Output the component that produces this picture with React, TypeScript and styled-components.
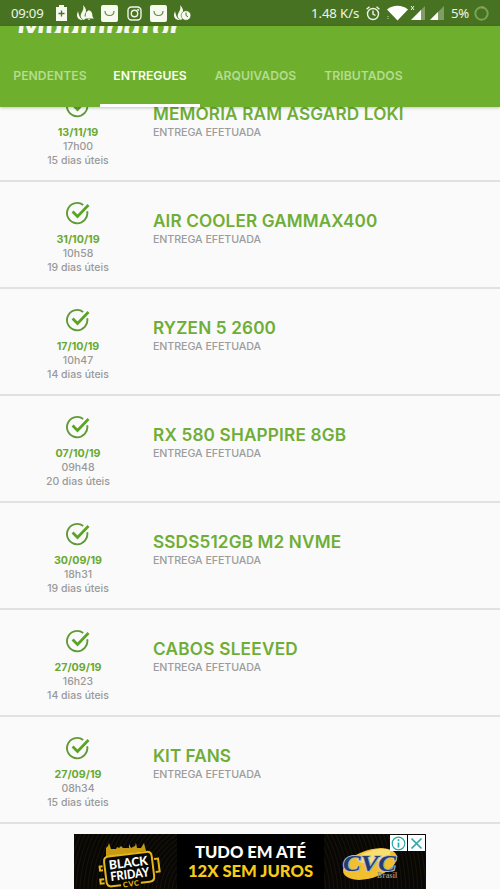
import React from "react";
import styled, { createGlobalStyle } from "styled-components";

const Global = createGlobalStyle`
  * { box-sizing: border-box; }
  body { margin: 0; background: #fafafa; overflow: hidden; }
`;

const Screen = styled.div`
  width: 500px;
  height: 889px;
  overflow: hidden;
  display: flex;
  flex-direction: column;
  background: #fafafa;
  font-family: Inter, "Liberation Sans", sans-serif;
`;

const StatusBar = styled.div`
  height: 26px;
  flex: none;
  display: flex;
  align-items: center;
  padding: 0 11px;
  background: #477221;
  color: #eef5e8;
  font: 400 13.2px/26px "Noto Sans", sans-serif;
`;

const StatusText = styled.span<{ $width: number; $spacing?: number; $gap?: number }>`
  width: ${(p) => p.$width}px;
  margin-left: ${(p) => p.$gap ?? 0}px;
  white-space: nowrap;
  letter-spacing: ${(p) => p.$spacing ?? 0}px;
`;

const StatusIcon = styled.svg<{ $gap?: number }>`
  flex: none;
  display: block;
  margin-left: ${(p) => p.$gap ?? 0}px;
`;

const Spacer = styled.div`
  flex: 1;
`;

const Header = styled.header`
  height: 81px;
  flex: none;
  display: flex;
  flex-direction: column;
  background: #6eb02d;
  box-shadow: 0 1px 3px rgba(0, 0, 0, 0.22);
  z-index: 1;
`;

const Brand = styled.div`
  height: 18px;
  flex: none;
  padding-left: 17px;
`;

const BrandName = styled.span`
  height: 7px;
  overflow: hidden;
  display: flex;
  align-items: flex-end;
  color: #f4f9ee;
  font: italic 900 32px/16px Lato, sans-serif;
  letter-spacing: 0.3px;
`;

const Tabs = styled.nav`
  flex: 1;
  display: flex;
`;

const Tab = styled.a<{ $active?: boolean; $width: number }>`
  width: ${(p) => p.$width}px;
  display: flex;
  justify-content: center;
  padding-top: 24px;
  color: ${(p) => (p.$active ? "#fafff5" : "#b5dc8f")};
  border-bottom: 3px solid ${(p) => (p.$active ? "#ffffff" : "transparent")};
  font-size: 12.2px;
  font-weight: 600;
  line-height: 16px;
  white-space: nowrap;
`;

const List = styled.main`
  flex: none;
  height: 717px;
  display: flex;
  flex-direction: column;
  justify-content: flex-end;
  overflow: hidden;
`;

const Row = styled.article`
  height: 107px;
  flex: none;
  display: flex;
  border-bottom: 2px solid #e1e1e1;
`;

const DateColumn = styled.div`
  width: 153px;
  padding: 18px 0 0 3px;
  display: flex;
  flex-direction: column;
  align-items: center;
  color: #999;
  font-size: 10.5px;
  font-weight: 500;
  line-height: 14px;
`;

const Check = styled.svg`
  display: block;
  margin-bottom: 6px;
`;

const DateText = styled.strong`
  color: #68a932;
  font-size: 10.7px;
  font-weight: 700;
  line-height: 15px;
`;

const Details = styled.div`
  padding-top: 29px;
  white-space: nowrap;
`;

const Title = styled.h2<{ $spacing: number }>`
  margin: 0;
  color: #6fae36;
  font-size: 17.2px;
  font-weight: 600;
  line-height: 20px;
  letter-spacing: ${(p) => p.$spacing}px;
`;

const State = styled.p`
  margin: 2px 0 0;
  color: #9c9c9c;
  font-size: 10.7px;
  font-weight: 500;
  line-height: 14px;
  letter-spacing: -0.08px;
`;

const AdArea = styled.footer`
  flex: 1;
  display: flex;
  justify-content: center;
  padding-top: 10px;
`;

const Ad = styled.div`
  position: relative;
  width: 352px;
  height: 55px;
  display: flex;
  background: repeating-radial-gradient(circle at 40% 110%, #080705 0 2px, #171307 3px, #080705 4px);
`;

const AdCopy = styled.div`
  width: 147px;
  padding-top: 9px;
  display: flex;
  flex-direction: column;
  align-items: center;
  background: #000;
  color: #fff;
  font: 900 16.6px/19px Lato, sans-serif;
  white-space: nowrap;
`;

const AdOffer = styled.span`
  color: #f8cc16;
`;

const AdArt = styled.svg`
  display: block;
  flex: none;
`;

const AdButtons = styled.div`
  position: absolute;
  top: 1px;
  right: 1px;
  display: flex;
  gap: 1px;
`;

const AdButton = styled.button`
  width: 17px;
  height: 16px;
  padding: 0;
  border: 0;
  background: #fff;
  display: grid;
  place-items: center;
`;

const items = [
  { date: "13/11/19", time: "17h00", days: 15, title: "MEMÓRIA RAM ASGARD LOKI", spacing: 0.13 },
  { date: "31/10/19", time: "10h58", days: 19, title: "AIR COOLER GAMMAX400", spacing: 0.1 },
  { date: "17/10/19", time: "10h47", days: 14, title: "RYZEN 5 2600", spacing: 0.13 },
  { date: "07/10/19", time: "09h48", days: 20, title: "RX 580 SHAPPIRE 8GB", spacing: 0.17 },
  { date: "30/09/19", time: "18h31", days: 19, title: "SSDS512GB M2 NVME", spacing: 0.13 },
  { date: "27/09/19", time: "16h23", days: 14, title: "CABOS SLEEVED", spacing: 0.24 },
  { date: "27/09/19", time: "08h34", days: 15, title: "KIT FANS", spacing: 0.02 },
];

const CheckIcon = () => (
  <Check width="26" height="26" viewBox="0 0 26 26" fill="none" stroke="#5f9a35" strokeWidth="1.9">
    <path d="M18.2 4.9A10.2 10.2 0 1 0 22.2 11.2" />
    <path d="m7.6 11.5 4.9 5L23.5 5" stroke="#5aa425" strokeWidth="2.7" />
  </Check>
);

const Flame = () => (
  <>
    <path d="M6 0c3 3 4 6 2 9-1 2 0 3 1 4l-2 2C3 13 3 10 5 7c1-2 2-4 1-7Z" />
    <path d="M1 6c1 4 1 6 5 9-4 0-6-2-6-5 0-2 1-3 1-4Z" />
  </>
);

const MailBox = ({ gap }: { gap: number }) => (
  <StatusIcon $gap={gap} width="17" height="17" viewBox="0 0 17 17">
    <rect width="17" height="17" rx="2" fill="#f6faef" />
    <path d="M4 6c0 6 9 6 9 0" fill="none" stroke="#668b48" strokeWidth="1.2" />
  </StatusIcon>
);

export default function App() {
  return (
    <Screen>
      <Global />
      <StatusBar>
        <StatusText $width={45} $spacing={-0.25}>09:09</StatusText>
        <StatusIcon width="11" height="16" viewBox="0 0 11 16" fill="#f6faef">
          <path d="M3 0h5v2h3v14H0V2h3Z" />
          <path d="M5.5 5.5v6M2.5 8.5h6" stroke="#477221" strokeWidth="1.3" />
        </StatusIcon>
        <StatusIcon $gap={10} width="17" height="16" viewBox="0 0 17 16" fill="#f6faef">
          <Flame />
          <path d="M7 13.5c1.6-1.2 1.6-2.6 1.8-4.5.2-2 1.3-3 2.700-3.300V5h1v.7c1.400.3 2.500 1.300 2.700 3.300.2 1.900.2 3.300 1.800 4.500Z" />
          <path d="M10.700 14.200h2.600q-1.300 1.800-2.600 0" />
        </StatusIcon>
        <MailBox gap={7} />
        <StatusIcon $gap={9} width="15" height="15" viewBox="0 0 15 15" fill="none" stroke="#eef5e8" strokeWidth="1.4">
          <rect x="1" y="1" width="13" height="13" rx="3.5" />
          <circle cx="7.5" cy="7.5" r="3.2" />
          <circle cx="11.2" cy="3.8" r=".4" />
        </StatusIcon>
        <MailBox gap={8} />
        <StatusIcon $gap={7} width="17" height="16" viewBox="0 0 17 16" fill="#f6faef">
          <Flame />
          <circle cx="12" cy="10.5" r="4.8" stroke="#477221" strokeWidth=".6" />
          <path d="M12 7.5v3l2 1.2" fill="none" stroke="#477221" />
        </StatusIcon>
        <Spacer />
        <StatusText $width={48} $spacing={-0.1}>1.48 K/s</StatusText>
        <StatusIcon $gap={7} width="14" height="15" viewBox="0 0 14 15" fill="none" stroke="#eef5e8" strokeWidth="1.4">
          <circle cx="7" cy="8" r="5.5" />
          <path d="M7 4.5V8l2.5 1.5M.6 3.3 3.5.8M13.4 3.3 10.5.8" />
        </StatusIcon>
        <StatusIcon $gap={7} width="21" height="16" viewBox="0 0 21 16" fill="#fff">
          <path d="M0 4.5C6-.5 15-.5 21 4.5L10.5 15.5Z" />
          <path d="M0 11h2v1H0Zm0 2h2v1H0Z" fill="#83a263" />
        </StatusIcon>
        <StatusIcon $gap={2} width="15" height="16" viewBox="0 0 15 16">
          <path d="M15 1v14H1Z" fill="#7f9d64" />
          <path d="M11 5v10H1Z" fill="#fff" />
          <path d="m1 1 3 4m0-4L1 5" stroke="#fff" strokeWidth=".9" />
        </StatusIcon>
        <StatusIcon $gap={4} width="15" height="16" viewBox="0 0 15 16">
          <path d="M15 1v14H1Z" fill="#7f9d64" />
          <path d="M9 7v8H1Z" fill="#fff" />
        </StatusIcon>
        <StatusText $gap={7} $width={23} $spacing={-0.25}>5%</StatusText>
        <StatusIcon width="15" height="15" viewBox="0 0 15 15" fill="none" strokeWidth="2">
          <circle cx="7.5" cy="7.5" r="6.2" stroke="#78a650" />
          <path d="M7.5 1.3q1.2 0 2 .4" stroke="#a8995b" />
        </StatusIcon>
      </StatusBar>
      <Header>
        <Brand>
          <BrandName>Muambator</BrandName>
        </Brand>
        <Tabs>
          <Tab $width={100}>PENDENTES</Tab>
          <Tab $width={100} $active>ENTREGUES</Tab>
          <Tab $width={111}>ARQUIVADOS</Tab>
          <Tab $width={105}>TRIBUTADOS</Tab>
        </Tabs>
      </Header>
      <List>
        {items.map((item) => (
          <Row key={item.title}>
            <DateColumn>
              <CheckIcon />
              <DateText>{item.date}</DateText>
              <span>{item.time}</span>
              <span>{item.days} dias úteis</span>
            </DateColumn>
            <Details>
              <Title $spacing={item.spacing}>{item.title}</Title>
              <State>ENTREGA EFETUADA</State>
            </Details>
          </Row>
        ))}
      </List>
      <AdArea>
        <Ad>
          <AdArt width="103" height="55" viewBox="0 0 103 55">
            <path d="M32 23V14l2-2 1-3 2 6h5l1-2 2 1 2-2 2 2h6v-4l2 4 4-2 1-3 1 5h4l3-5 2 8Z" fill="#c69a13" />
            <g transform="rotate(-7 56 34)">
              <path d="M45 50H36q-5 0-5-5V25q0-5 5-5h38q5 0 5 5v20q0 5-5 5H65" fill="#080805" stroke="#e5b61b" strokeWidth="2" />
              <path d="M29 29h-3v4h3M29 42h-4v4h4M81 28h4v13h-4" fill="none" stroke="#e5b61b" strokeWidth="2" />
              <text x="55" y="33" textAnchor="middle" fill="#fff" fontFamily="Lato" fontWeight="900" fontSize="12.5" textLength="39" lengthAdjust="spacingAndGlyphs">BLACK</text>
              <text x="55" y="44.500" textAnchor="middle" fill="#fff" fontFamily="Lato" fontWeight="900" fontSize="12.5" textLength="39" lengthAdjust="spacingAndGlyphs">FRIDAY</text>
              <text x="55" y="52.500" textAnchor="middle" fill="#e5b61b" fontFamily="Lato" fontWeight="900" fontSize="7.5" textLength="16">CVC</text>
            </g>
          </AdArt>
          <AdCopy>
            <span>TUDO EM ATÉ</span>
            <AdOffer>12X SEM JUROS</AdOffer>
          </AdCopy>
          <AdArt width="102" height="55" viewBox="0 0 102 55">
            <ellipse cx="46" cy="30" rx="28" ry="14" transform="rotate(-18 46 30)" fill="#f2c02e" />
            <ellipse cx="50" cy="22" rx="17" ry="6" transform="rotate(-14 50 22)" fill="#f9df72" />
            <text x="19" y="37" fill="#263c70" stroke="#a9bcd9" strokeWidth="1.8" paintOrder="stroke" fontFamily="Liberation Serif" fontStyle="italic" fontWeight="700" fontSize="23" textLength="53" lengthAdjust="spacingAndGlyphs">CVC</text>
            <text x="53" y="44" fill="#908d83" fontFamily="Liberation Serif" fontWeight="700" fontSize="7.5" textLength="20">Brasil</text>
          </AdArt>
          <AdButtons>
            <AdButton aria-label="Info">
              <svg width="15" height="15" viewBox="0 0 15 15" fill="none" stroke="#29a6a8" strokeWidth="1.2">
                <circle cx="7.5" cy="7.5" r="6.3" />
                <path d="M7.5 6.5v5M7.5 3.2v1.7" strokeWidth="1.7" />
              </svg>
            </AdButton>
            <AdButton aria-label="Close">
              <svg width="13" height="13" viewBox="0 0 13 13" stroke="#29a6a8" strokeWidth="1.6">
                <path d="m1.5 1.5 10 10m0-10-10 10" />
              </svg>
            </AdButton>
          </AdButtons>
        </Ad>
      </AdArea>
    </Screen>
  );
}
